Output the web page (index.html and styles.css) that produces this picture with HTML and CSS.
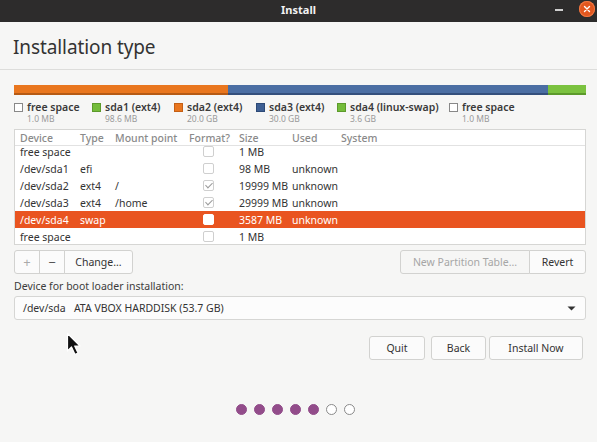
FILE: index.html
```html
<!DOCTYPE html>
<html>
<head>
<meta charset="utf-8">
<link rel="stylesheet" href="styles.css">
</head>
<body>
<div class="window">
  <header class="titlebar">
    <span class="title">Install</span>
    <div class="wm">
      <span class="min"></span>
      <span class="close"><svg width="8" height="8" viewBox="0 0 8 8"><path d="M1.5 1.5 L6.5 6.5 M6.5 1.5 L1.5 6.5" stroke="#fff" stroke-width="1.4" stroke-linecap="round"/></svg></span>
    </div>
  </header>
  <div class="heading">Installation type</div>
  <main class="content">
    <div class="bar">
      <span class="seg orange" style="width:214px"></span>
      <span class="seg blue" style="width:320px"></span>
      <span class="seg green" style="width:38px"></span>
    </div>
    <div class="legend">
      <div class="item" style="width:78px"><span class="sw free"></span><div><div class="lname">free space</div><div class="lsize">1.0 MB</div></div></div>
      <div class="item" style="width:82px"><span class="sw c-green"></span><div><div class="lname">sda1 (ext4)</div><div class="lsize">98.6 MB</div></div></div>
      <div class="item" style="width:82px"><span class="sw c-orange"></span><div><div class="lname">sda2 (ext4)</div><div class="lsize">20.0 GB</div></div></div>
      <div class="item" style="width:81px"><span class="sw c-blue"></span><div><div class="lname">sda3 (ext4)</div><div class="lsize">30.0 GB</div></div></div>
      <div class="item" style="width:112px"><span class="sw c-green"></span><div><div class="lname">sda4 (linux-swap)</div><div class="lsize">3.6 GB</div></div></div>
      <div class="item"><span class="sw free"></span><div><div class="lname">free space</div><div class="lsize">1.0 MB</div></div></div>
    </div>
    <div class="table">
      <div class="row head">
        <span>Device</span><span>Type</span><span>Mount point</span><span>Format?</span><span>Size</span><span>Used</span><span>System</span>
      </div>
      <div class="body">
        <div class="scroll">
          <div class="row"><span>free space</span><span></span><span></span><span><i class="cb"></i></span><span>1 MB</span><span></span><span></span></div>
          <div class="row"><span>/dev/sda1</span><span>efi</span><span></span><span><i class="cb"></i></span><span>98 MB</span><span>unknown</span><span></span></div>
          <div class="row"><span>/dev/sda2</span><span>ext4</span><span>/</span><span><i class="cb on"></i></span><span>19999 MB</span><span>unknown</span><span></span></div>
          <div class="row"><span>/dev/sda3</span><span>ext4</span><span>/home</span><span><i class="cb on"></i></span><span>29999 MB</span><span>unknown</span><span></span></div>
          <div class="row sel"><span>/dev/sda4</span><span>swap</span><span></span><span><i class="cb"></i></span><span>3587 MB</span><span>unknown</span><span></span></div>
          <div class="row"><span>free space</span><span></span><span></span><span><i class="cb"></i></span><span>1 MB</span><span></span><span></span></div>
        </div>
      </div>
    </div>
    <div class="toolbar">
      <div class="group">
        <button class="btn icon dim">+</button><button class="btn icon">&minus;</button><button class="btn change">Change...</button>
      </div>
      <div class="group">
        <button class="btn newtable">New Partition Table...</button><button class="btn revert">Revert</button>
      </div>
    </div>
    <div class="label">Device for boot loader installation:</div>
    <div class="combo">
      <span>/dev/sda&nbsp;&nbsp;&nbsp;ATA VBOX HARDDISK (53.7 GB)</span>
      <svg width="9" height="5" viewBox="0 0 9 5"><path d="M0.5 0.5 H8.5 L4.5 4.5 Z" fill="#333"/></svg>
    </div>
    <div class="actions">
      <button class="btn quit">Quit</button>
      <button class="btn back">Back</button>
      <button class="btn install">Install Now</button>
    </div>
    <div class="dots">
      <i class="dot on"></i><i class="dot on"></i><i class="dot on"></i><i class="dot on"></i><i class="dot on"></i><i class="dot"></i><i class="dot"></i>
    </div>
  </main>
  <svg class="cursor" width="18" height="26" viewBox="0 0 18 26"><path d="M1.5 1.5 L1.5 19 L5.5 15 L9 22.5 L12 21 L8.7 14 L14 14 Z" fill="#111" stroke="#fff" stroke-width="1.2" stroke-linejoin="round"/></svg>
</div>
</body>
</html>
```

FILE: styles.css
```css
* { box-sizing: border-box; }
html, body { margin: 0; padding: 0; }
body {
  background: #f6f6f5;
  font-family: "Noto Sans", "Open Sans", sans-serif;
  color: #3c3c3c;
  width: 597px;
  height: 442px;
  overflow: hidden;
}
.window { position: relative; width: 597px; height: 442px; }
.titlebar {
  height: 22px;
  background: #2d2c2c;
  display: flex;
  align-items: center;
  justify-content: center;
  position: relative;
  padding-bottom: 3px;
}
.title { color: #f2f2f2; font-weight: 700; font-size: 11px; }
.wm { position: absolute; right: 2px; top: 1px; display: flex; align-items: center; gap: 16px; }
.min { width: 8px; height: 2px; background: #cfcfcf; margin-top: 2px; }
.close {
  width: 16px; height: 16px; border-radius: 50%;
  background: #e2571f;
  display: flex; align-items: center; justify-content: center;
  box-shadow: inset 0 0 0 1px #f07a45;
}
.heading {
  font-size: 19px;
  color: #333;
  padding: 12px 13px 0;
  height: 48px;
  border-bottom: 1px solid #dddddb;
  letter-spacing: -0.1px;
}
.content { padding: 15px 11px 0 14px; }
.bar { display: flex; height: 10px; width: 572px; }
.seg { height: 10px; display: block; }
.orange { background: #e9761e; border-bottom: 2px solid #b65a14; }
.blue { background: #4b6ea3; border-bottom: 2px solid #344f7c; }
.green { background: #7bc23f; border-bottom: 2px solid #5c9a2b; }
.legend { display: flex; margin-top: 5px; height: 29px; }
.item { display: flex; gap: 4px; }
.sw { width: 9px; height: 9px; margin-top: 3px; flex: none; }
.sw.free { border: 1px solid #888; background: #fff; }
.c-green { background: #74bc3a; border: 1px solid #5c9a2b; }
.c-orange { background: #e9761e; border: 1px solid #c45f14; }
.c-blue { background: #3e5f93; border: 1px solid #2d4a77; }
.lname { font-size: 10.5px; font-weight: 600; color: #3a3a3a; line-height: 14px; }
.lsize { font-size: 8.5px; color: #9a9a9a; line-height: 10px; }
.table {
  width: 572px;
  border: 1px solid #d6d6d4;
  background: #fff;
  height: 116px;
  font-size: 10.5px;
}
.row {
  display: grid;
  grid-template-columns: 60px 35px 74px 50px 53px 49px 1fr;
  padding-left: 5px;
  height: 17px;
  align-items: center;
  color: #333;
  white-space: nowrap;
}
.row.head { color: #8a8a8a; height: 16px; border-bottom: 1px solid #e2e2e2; font-weight: 500; }
.body { height: 97px; overflow: hidden; }
.scroll { margin-top: -3px; }
.row.sel { background: #e95420; color: #fff; }
.cb {
  display: block; width: 11px; height: 11px; margin-left: 14px;
  border: 1px solid #cfcfcf; border-radius: 2px; background: #fff;
  position: relative;
}
.cb.on::after {
  content: ""; position: absolute; left: 3px; top: 0px;
  width: 3px; height: 6px;
  border: solid #9a9a9a; border-width: 0 1px 1px 0;
  transform: rotate(45deg);
}
.row.sel .cb { border-color: #fff; }
.toolbar { display: flex; justify-content: space-between; margin-top: 5px; }
.group { display: flex; }
.btn {
  font-family: inherit;
  font-size: 10.5px;
  color: #333;
  background: #fbfbfb;
  border: 1px solid #d2d2d0;
  height: 24px;
  padding: 0;
  margin: 0;
  border-radius: 3px;
}
.group .btn { border-radius: 0; margin-left: -1px; }
.group .btn:first-child { border-radius: 3px 0 0 3px; margin-left: 0; }
.group .btn:last-child { border-radius: 0 3px 3px 0; }
.icon { width: 26px; font-size: 13px; color: #555; }
.icon.dim { color: #aaa; }
.change { width: 69px; }
.newtable { width: 130px; color: #a6a6a6; background: #f6f6f5; }
.revert { width: 57px; }
.label { font-size: 10.5px; color: #3c3c3c; margin-top: 4px; height: 16px; line-height: 16px; }
.combo {
  margin-top: 2px;
  width: 572px; height: 24px;
  border: 1px solid #d6d6d4; border-radius: 3px;
  background: #fcfcfc;
  display: flex; align-items: center; justify-content: space-between;
  padding: 0 9px 0 8px;
  font-size: 10.5px; color: #333;
}
.actions { display: flex; justify-content: flex-end; margin-top: 16px; padding-right: 3px; }
.quit { width: 56px; }
.back { width: 55px; margin-left: 6px; }
.install { width: 94px; margin-left: 3px; }
.dots { display: flex; justify-content: center; gap: 7px; margin-top: 44px; padding-right: 9px; }
.dot { display: block; width: 11px; height: 11px; border-radius: 50%; border: 1px solid #8a8a8a; background: #fff; }
.dot.on { background: #924c8a; border-color: #924c8a; }
.cursor { position: absolute; left: 66px; top: 332px; }
```
